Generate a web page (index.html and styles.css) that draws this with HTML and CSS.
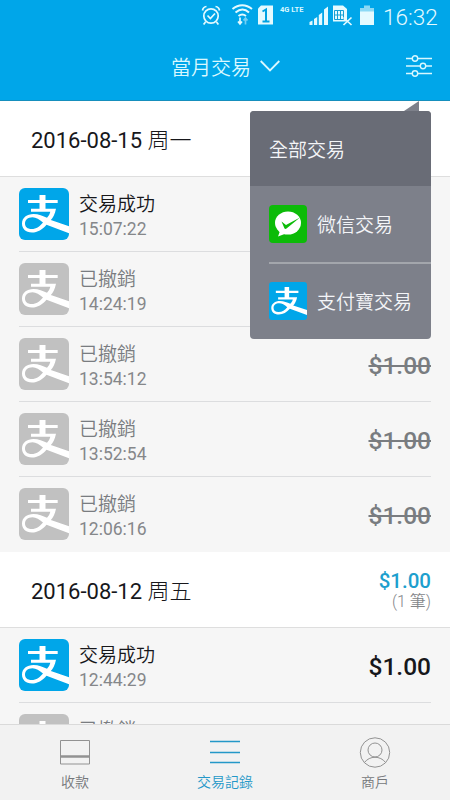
FILE: index.html
```html
<!DOCTYPE html>
<html lang="zh-Hant">
<head>
<meta charset="utf-8">
<title>當月交易</title>
<link rel="stylesheet" href="styles.css">
</head>
<body>
<svg class="defs" width="0" height="0">
  <symbol id="alipay" viewBox="0 0 50 52" preserveAspectRatio="none">
    <path d="M20.500 7h6v5H38.700v3H26.500V20.700H37C36 26 33.800 30 31.800 32L50 38.200V45.200L27.500 36.700C23.500 41.500 18.500 44.500 13 44.500C6.500 44.500 3 40.800 3 35.600C3 29.700 8 26 14.500 26C19.500 26 24 28 28 29.800C29.800 28 30.800 26 31.300 23.800H12V20.700H20.500V15H9V12H20.500ZM24 34.500C20.500 31.500 17 29.200 13.500 29.200C8.800 29.200 6 32 6 35.500C6 38.800 8.500 41 12.500 41C17.500 41 21 38.300 24 34.500Z" fill="#fff" fill-rule="evenodd"/>
  </symbol>
</svg>
<div class="screen">
  <header class="top">
    <div class="status">
      <svg width="206" height="34" viewBox="190 0 206 34" fill="none" stroke="#e4faff" stroke-width="1.700">
        <circle cx="211" cy="16" r="7.200"/>
        <path d="M207.500 15.500l2.900 3 4.600-5M205.500 22l-1.900 2.500M216.500 22l1.900 2.500M202.500 10.500c.3-2 2-3.800 4-4M219.500 10.500c-.3-2-2-3.800-4-4"/>
        <path d="M232.500 9c6-5 13.500-5 19.500 0M235.500 12.500c4.500-3.700 9.500-3.700 13.500 0M238.500 16c2.500-2 5-2 7.500 0" stroke-width="2"/>
        <path d="M240 17.500v6M238 21.500l2 2.500 2-2.500"/><path d="M245.500 24.500v-6M243.500 20.500l2-2.500 2 2.500" opacity=".5"/>
        <path d="M261 5.500h12v19h-15v-16z" fill="#e4faff" stroke="none"/>
        <path d="M262.500 11.500l3.500-2v12M262.500 21.500h7" stroke="#00a2e2" stroke-width="2"/>
        <path d="M309.500 25v-3l3-1.500v4.500zM314 25v-6l3.200-2v8zM318.800 25v-10l3.400-2.500v12.500zM324 25v-15.500l4-3v18.500z" fill="#e4faff" stroke="none"/>
        <path d="M333 5.500h10l4 3.500v12.500h-14z" fill="#e4faff" stroke="none"/>
        <path d="M334.500 10.500h9v9h-9zM337.500 10.500v9M340.500 10.500v9M334.500 15h9" stroke="#159fd5" stroke-width="1"/>
        <path d="M343.500 17.500l8 7.500M351.500 17.500l-8 7.500" stroke-width="1.700"/>
        <path d="M360 8h4v-2.500h6v2.500h4v4h-14z" fill="#8bd9f5" stroke="none"/><path d="M360 11.500h14v13.500h-14z" fill="#e4faff" stroke="none"/>
      </svg>
      <span class="lte">4G LTE</span>
      <span class="clock">16:32</span>
    </div>
    <div class="titlebar">
      <div class="title">當月交易 <svg width="20" height="12" viewBox="0 0 20 12" fill="none" stroke="#d9f8ff" stroke-width="1.800"><path d="M.7 1l9.300 9.500L19.300 1"/></svg></div>
      <svg class="filter" width="26" height="24" viewBox="0 0 26 24" fill="none" stroke="#d9f8ff" stroke-width="1.400"><path d="M0 4.500h6M12 4.500h14M0 12h14M20 12h6M0 19.500h6M12 19.500h14"/><circle cx="9" cy="4.500" r="2.700"/><circle cx="17" cy="12" r="2.700"/><circle cx="9" cy="19.500" r="2.700"/></svg>
    </div>
    <div class="menu">
      <div class="item selected">全部交易</div>
      <div class="item"><svg class="logo" viewBox="0 0 38 38"><rect width="38" height="38" rx="4" fill="#0cbb08"/><ellipse cx="19" cy="18" rx="13" ry="11.500" fill="#fff"/><path d="M11 26l-2 5.500 8-3z" fill="#fff"/><path d="M12.500 16.500l4.500 3.500 14-7.500-13.500 11q-1.500 1-2.200-.5z" fill="#0cbb08"/></svg>微信交易</div>
      <div class="item divided"><svg class="logo pay"><use href="#alipay" width="38" height="38"/></svg>支付寶交易</div>
    </div>
  </header>
  <main class="list">
    <section>
      <div class="day"><span>2016-08-15 周一</span></div>
      <div class="row done"><svg class="badge"><use href="#alipay" width="50" height="52"/></svg><div class="info"><b>交易成功</b><time>15:07:22</time></div></div>
      <div class="row"><svg class="badge"><use href="#alipay" width="50" height="52"/></svg><div class="info"><b>已撤銷</b><time>14:24:19</time></div></div>
      <div class="row"><svg class="badge"><use href="#alipay" width="50" height="52"/></svg><div class="info"><b>已撤銷</b><time>13:54:12</time></div><span class="price">$1.00</span></div>
      <div class="row"><svg class="badge"><use href="#alipay" width="50" height="52"/></svg><div class="info"><b>已撤銷</b><time>13:52:54</time></div><span class="price">$1.00</span></div>
      <div class="row"><svg class="badge"><use href="#alipay" width="50" height="52"/></svg><div class="info"><b>已撤銷</b><time>12:06:16</time></div><span class="price">$1.00</span></div>
    </section>
    <section>
      <div class="day"><span>2016-08-12 周五</span><div class="sum"><b>$1.00</b><small>(1 筆)</small></div></div>
      <div class="row done"><svg class="badge"><use href="#alipay" width="50" height="52"/></svg><div class="info"><b>交易成功</b><time>12:44:29</time></div><span class="price">$1.00</span></div>
      <div class="row"><svg class="badge"><use href="#alipay" width="50" height="52"/></svg><div class="info"><b>已撤銷</b></div></div>
    </section>
  </main>
  <nav class="tabs">
    <div class="tab"><svg width="32" height="32" viewBox="0 0 32 32" fill="none" stroke="#929292"><path d="M1.500 4.500h29v23.500h-29z"/><path d="M1.500 20.500h29" stroke-width="2.500"/></svg>收款</div>
    <div class="tab active"><svg width="32" height="32" viewBox="0 0 32 32" fill="none" stroke="#2498c8" stroke-width="1.300"><path d="M1 5.500h30M1 16.500h30M1 26.500h30"/></svg>交易記錄</div>
    <div class="tab"><svg width="32" height="32" viewBox="0 0 32 32" fill="none" stroke="#929292"><circle cx="16" cy="16.500" r="14.700"/><circle cx="16" cy="14" r="7"/><path d="M5.500 26.500c5-7 16-7 21 0"/></svg>商戶</div>
  </nav>
</div>
</body>
</html>
```
FILE: styles.css
```css
* { box-sizing: border-box; }
body { margin: 0; font-family: Roboto, "Noto Sans CJK TC DemiLight", "Noto Sans CJK TC", sans-serif; font-weight: 400; }
.defs { position: absolute; }
.screen { width: 450px; height: 800px; display: flex; flex-direction: column; overflow: hidden; background: #f6f6f6; }
b { font-weight: 400; }

.top { position: relative; z-index: 2; height: 101px; flex: none; background: #00a6e9; border-bottom: 1px solid #168fbd; color: #d9f8ff; }
.status { position: relative; height: 34px; display: flex; align-items: center; padding-left: 190px; }
.lte { position: absolute; left: 280px; top: 5px; font-size: 7.5px; line-height: 9px; font-weight: 700; white-space: nowrap; }
.clock { position: absolute; left: 383px; top: 3px; font-size: 22.5px; line-height: 28px; font-weight: 300; color: #e4faff; }
.titlebar { height: 66px; display: flex; align-items: center; justify-content: space-between; padding: 0 18px 2px 171px; }
.title { display: flex; align-items: center; gap: 9px; font-size: 20px; font-weight: 300; }

.menu { position: absolute; left: 250px; top: 111px; width: 181px; height: 228px; background: #7d808a; border-radius: 4px; color: #f4f5f8; }
.menu::before { content: ""; position: absolute; right: 12px; top: -10px; border-left: 15px solid transparent; border-bottom: 10px solid #7d808a; }
.item { height: 76px; display: flex; align-items: center; gap: 10px; margin-left: 19px; padding-bottom: 1px; font-size: 19px; font-weight: 300; }
.selected { height: 75px; margin-left: 0; padding-left: 19px; background: #696c76; border-radius: 4px 4px 0 0; }
.divided { border-top: 2px solid #a3a6ac; }
.logo { width: 38px; height: 38px; flex: none; }
.pay { background: #00a6e9; border-radius: 3px; }

.list { flex: 1; overflow: hidden; }
.day { height: 76px; display: flex; align-items: center; justify-content: space-between; padding: 0 19px 1px 31px; background: #fff; border-bottom: 1px solid #dedede; color: #17171b; font-size: 22px; }
.day > span { font-family: Roboto, "Noto Sans CJK TC Light", "Noto Sans CJK TC", sans-serif; }
.sum { display: flex; flex-direction: column; align-items: flex-end; margin-top: 4px; }
.sum b { color: #1d9fce; font-size: 20.5px; line-height: 22px; font-weight: 500; }
.sum small { color: #85878a; font-size: 16px; line-height: 20px; font-weight: 300; }
.row { height: 75px; margin: 0 19px; display: flex; align-items: center; border-bottom: 1px solid #dcdddf; color: #797c80; }
.row:last-child { border-bottom-color: transparent; }
.badge { width: 50px; height: 52px; margin-right: 10px; border-radius: 6px; background: #c1c1c1; flex: none; }
.info { flex: 1; display: flex; flex-direction: column; height: 46px; font-weight: 300; }
.info b { font-size: 19px; line-height: 28px; font-weight: 300; }
.info time { font-size: 17.5px; line-height: 20px; font-weight: 400; color: #85878a; }
.price { padding-top: 3px; font-size: 24.5px; font-weight: 500; text-decoration: line-through; text-decoration-thickness: 1.5px; }
.done .badge { background: #00a6e9; }
.done b, .done .price { color: #17171b; text-decoration: none; }

.tabs { height: 76px; flex: none; display: grid; grid-template-columns: repeat(3, 1fr); background: #f2f2f2; border-top: 1px solid #dadada; }
.tab { display: flex; flex-direction: column; align-items: center; padding-top: 11px; color: #75777a; font-size: 14px; line-height: 28px; font-weight: 300; }
.active { color: #2498c8; font-weight: 400; }
```
